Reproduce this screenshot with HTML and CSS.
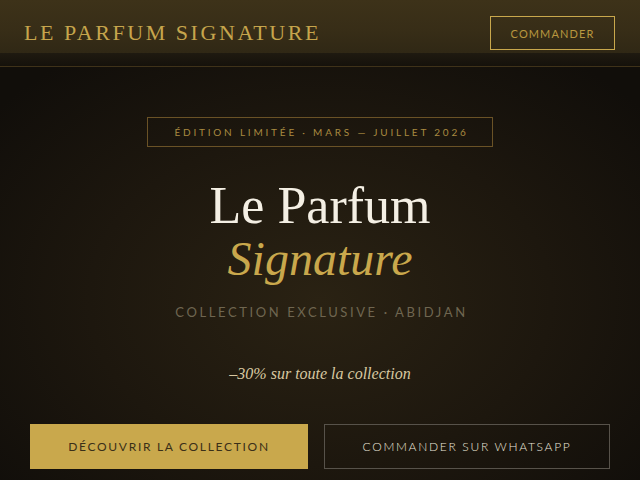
FILE: index.html
```html
<!DOCTYPE html>
<html lang="fr">
<head>
<meta charset="utf-8">
<title>Le Parfum Signature</title>
<link rel="stylesheet" href="styles.css">
</head>
<body>
<header class="site-header">
  <div class="brand">LE PARFUM SIGNATURE</div>
  <a class="btn-header" href="#">COMMANDER</a>
</header>
<div class="header-shade"></div>
<main class="hero">
  <div class="edition">ÉDITION LIMITÉE · MARS — JUILLET 2026</div>
  <h1 class="title">
    <span class="title-main">Le Parfum</span>
    <span class="title-accent">Signature</span>
  </h1>
  <p class="subtitle">COLLECTION EXCLUSIVE · ABIDJAN</p>
  <p class="promo">–30% sur toute la collection</p>
  <div class="actions">
    <a class="btn btn-gold" href="#">DÉCOUVRIR LA COLLECTION</a>
    <a class="btn btn-outline" href="#">COMMANDER SUR WHATSAPP</a>
  </div>
</main>
</body>
</html>
```

FILE: styles.css
```css
* { box-sizing: border-box; }
html, body { margin: 0; padding: 0; }
body {
  width: 640px;
  min-height: 480px;
  overflow: hidden;
  background: radial-gradient(ellipse 420px 300px at 320px 300px, #2a2213 0%, #1d170e 55%, #110e0a 100%);
  background-color: #110e0a;
  font-family: "Lato", "Liberation Sans", sans-serif;
}
a { text-decoration: none; }

.site-header {
  height: 53px;
  display: flex;
  align-items: center;
  justify-content: space-between;
  padding: 13px 24px 0 24px;
  background: linear-gradient(180deg, #3d3219 0%, #372d17 60%, #302815 100%);
}
.brand {
  font-family: "Liberation Serif", serif;
  font-size: 22px;
  letter-spacing: 2.55px;
  color: #c6a54c;
}
.btn-header {
  width: 125px;
  height: 34px;
  margin-right: 1px;
  display: flex;
  align-items: center;
  justify-content: center;
  border: 1px solid #c9a84c;
  color: #b8973f;
  font-size: 11px;
  letter-spacing: 1.1px;
}
.header-shade {
  height: 14px;
  background: linear-gradient(180deg, #1f1a10 0%, #15110b 100%);
  border-bottom: 1px solid #3f3219;
}

.hero {
  display: flex;
  flex-direction: column;
  align-items: center;
  padding-top: 50px;
}
.edition {
  width: 346px;
  height: 30px;
  display: flex;
  align-items: center;
  justify-content: center;
  border: 1px solid #6a5226;
  color: #a98a40;
  font-size: 10px;
  letter-spacing: 2.8px;
  padding-left: 3px;
}
.title {
  margin: 32px 0 0 0;
  display: flex;
  flex-direction: column;
  align-items: center;
  font-family: "Liberation Serif", serif;
  font-weight: normal;
}
.title-main {
  font-size: 52px;
  line-height: 54px;
  color: #f4efe4;
}
.title-accent {
  font-size: 48px;
  line-height: 52px;
  font-style: italic;
  color: #c9a84c;
}
.subtitle {
  margin: 19px 0 0 0;
  font-size: 13px;
  font-weight: 400;
  letter-spacing: 2.6px;
  color: #6f6650;
  padding-left: 3px;
}
.promo {
  margin: 45px 0 0 0;
  font-family: "Liberation Serif", serif;
  font-style: italic;
  font-size: 16px;
  color: #d8c8a0;
}
.actions {
  margin-top: 41px;
  width: 100%;
  display: flex;
  gap: 16px;
  padding: 0 30px;
}
.btn {
  height: 45px;
  display: flex;
  align-items: center;
  justify-content: center;
  font-size: 12px;
  font-weight: 300;
  letter-spacing: 1.7px;
}
.btn-gold {
  width: 278px;
  background: #c9a84c;
  color: #3a2f18;
  font-weight: 400;
}
.btn-outline {
  width: 286px;
  border: 1px solid #57524a;
  color: #ebe6da;
}
```
